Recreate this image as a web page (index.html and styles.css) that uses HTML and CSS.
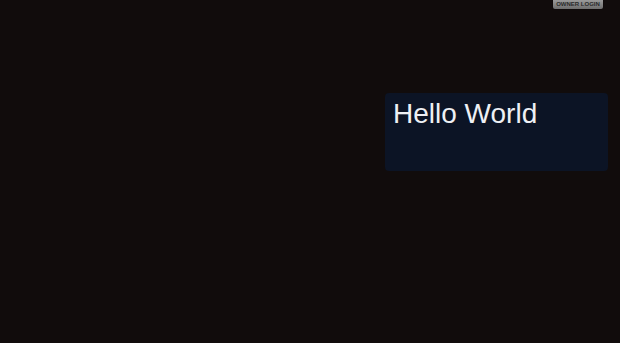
FILE: index.html
```html
<!DOCTYPE html>
<html lang="en">
<head>
    <meta charset="UTF-8">
    <meta name="viewport" content="width=device-width, initial-scale=1.0">
    <title>Hello World</title>
    <link rel="stylesheet" href="styles.css">
</head>
<body>
    <a class="owner-login" href="#">OWNER LOGIN</a>
    <div class="stage">
        <div class="panel">
            <h1>Hello World</h1>
        </div>
    </div>
</body>
</html>
```

FILE: styles.css
```css
html, body {
    height: 100%;
}
body {
    margin: 0;
    padding: 0;
    background-color: #110c0c;
    font-family: "Liberation Sans", Arial, sans-serif;
}
.owner-login {
    position: absolute;
    top: 0;
    right: 17px;
    width: 50px;
    height: 9px;
    line-height: 9px;
    font-size: 6px;
    font-weight: bold;
    text-align: center;
    color: #2a2a2a;
    text-decoration: none;
    background: linear-gradient(#9a9a9a, #6e6e6e);
    border-radius: 0 0 2px 2px;
    box-shadow: 0 0 1px #000;
}
.stage {
    display: flex;
    justify-content: flex-end;
    padding: 93px 12px 0 0;
}
.panel {
    width: 223px;
    height: 78px;
    box-sizing: border-box;
    padding: 5px 8px;
    background-color: #0c1425;
    border-radius: 4px;
}
.panel h1 {
    margin: 0;
    font-size: 28px;
    font-weight: normal;
    color: #eef0f4;
}
```
